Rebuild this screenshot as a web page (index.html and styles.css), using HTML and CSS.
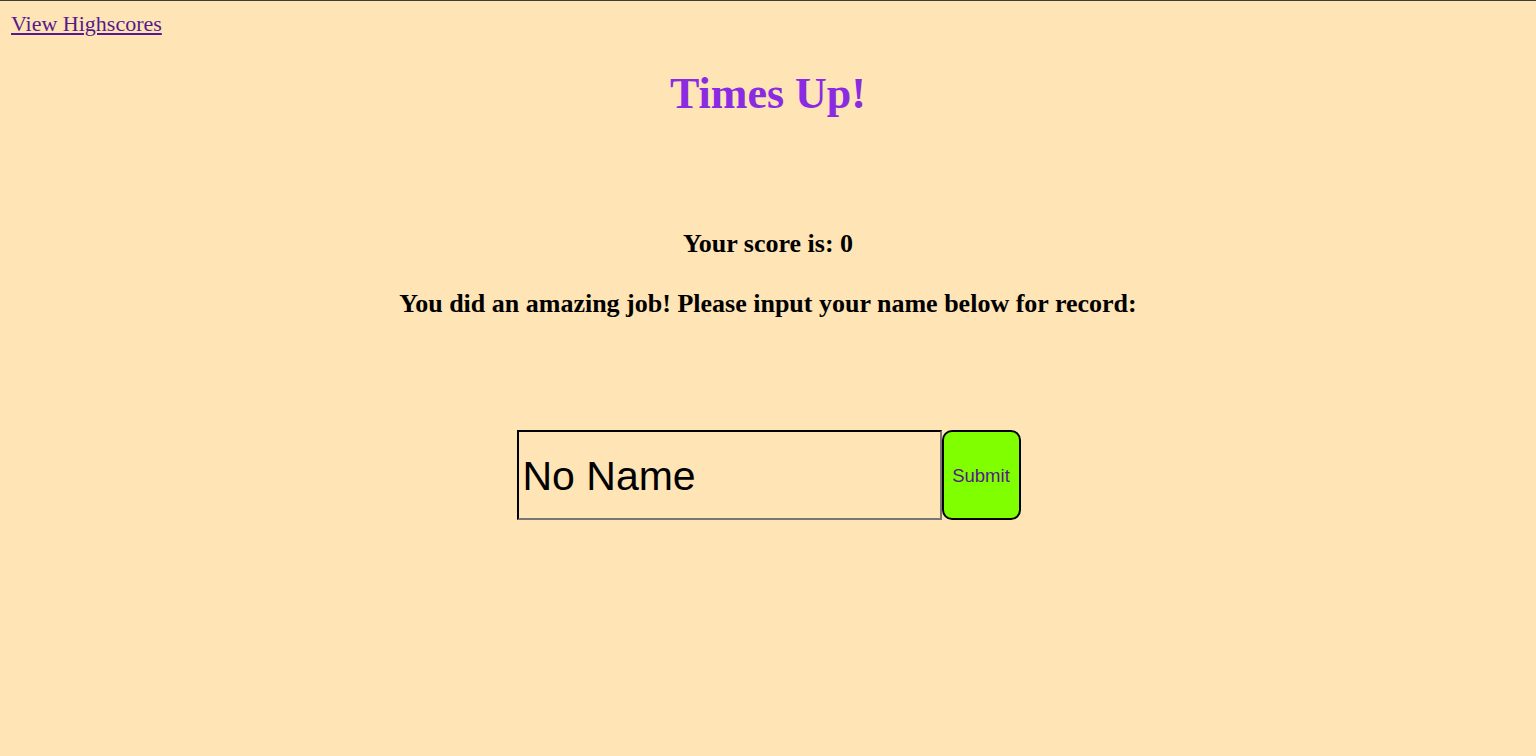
FILE: index.html
```html
<!DOCTYPE html>
<html>
<head>
<meta charset="utf-8">
<link rel="stylesheet" href="styles.css">
</head>
<body>
<div class="topline"></div>
<header class="nav">
  <a class="hs-link" href="#">View Highscores</a>
</header>
<main class="content">
  <h1 class="title">Times Up!</h1>
  <p class="score">Your score is: 0</p>
  <p class="msg">You did an amazing job! Please input your name below for record:</p>
  <form class="entry">
    <input class="name-input" type="text" value="No Name">
    <button class="submit-btn" type="button">Submit</button>
  </form>
</main>
</body>
</html>
```
FILE: styles.css
```css
html, body {
  margin: 0;
  padding: 0;
  background: #ffe4b5;
  font-family: "Liberation Serif", "Times New Roman", serif;
  height: 100%;
}
.topline {
  height: 1px;
  background: #3c3c3c;
}
.nav {
  padding: 10px 11px 0 11px;
  height: 27px;
}
.hs-link {
  font-size: 22px;
  color: #551a8b;
  text-decoration: underline;
}
.content {
  display: flex;
  flex-direction: column;
  align-items: center;
}
.title {
  margin: 30px 0 0 0;
  font-size: 44px;
  line-height: 52px;
  color: #8a2be2;
  font-weight: bold;
}
.score {
  margin: 109px 0 0 0;
  font-size: 26px;
  line-height: 30px;
  font-weight: bold;
  color: #000;
}
.msg {
  margin: 30px 0 0 0;
  font-size: 26px;
  line-height: 30px;
  font-weight: bold;
  color: #000;
}
.entry {
  margin: 111px 0 0 1px;
  display: flex;
  align-items: stretch;
}
.name-input {
  box-sizing: border-box;
  width: 425px;
  height: 90px;
  border: 2px inset #767676;
  border-top-color: #222;
  border-left-color: #222;
  background: transparent;
  font-family: "Liberation Sans", Arial, sans-serif;
  font-size: 41px;
  padding: 2px 4px 0 4px;
  color: #000;
  margin: 0;
}
.submit-btn {
  box-sizing: border-box;
  width: 79px;
  height: 90px;
  margin: 0;
  background: #7fff00;
  border: 2px solid #000;
  border-radius: 10px;
  color: #551a8b;
  font-family: "Liberation Sans", Arial, sans-serif;
  font-size: 18.5px;
  padding: 2px 0 0 0;
}
```
